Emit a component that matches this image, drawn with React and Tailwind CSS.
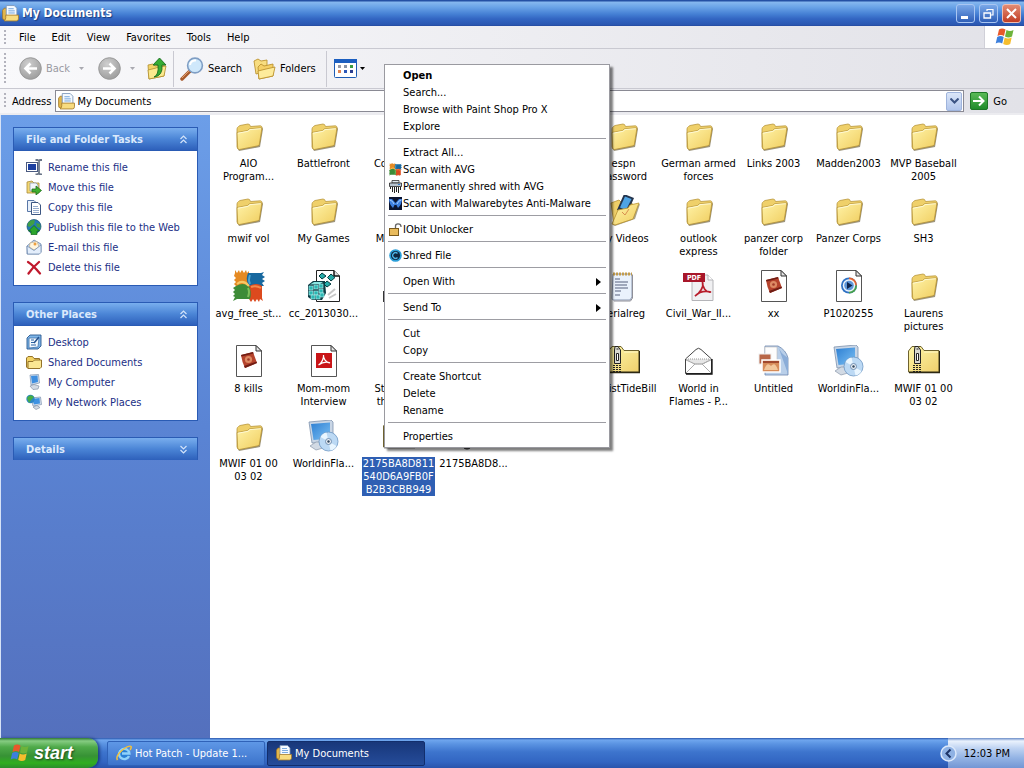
import React from "react";

/* ---------- large icons ---------- */

function Folder() {
    return (
        <svg width="32" height="32" viewBox="0 0 32 32">
            <path d="M6 31 L27 27 L30 9 L29 7 L26 25 L5 29 Z" fill="#7d7352" opacity=".75" />
            <path d="M4 9 Q4 7.500 5.500 6.500 L7 5.500 L15 4 Q17 4 17.500 6.500 L27.500 5.800 Q29 6 29 8 L26 25 L5 29 L4 27 Z" fill="#efd06a" stroke="#b9973c" strokeWidth=".8" />
            <path d="M4 12.500 L14.500 10.500 L16.500 8.800 L28 7.800 Q29 8 28.800 9 L26.300 24.500 Q26 25.500 25 25.800 L6.500 29.500 Q4.800 29.500 4.700 28 Z" fill="url(#folderFront)" stroke="#b08c30" strokeWidth=".7" />
            <path d="M5 13.200 L15 11.300 L17 9.600 L27.800 8.700" fill="none" stroke="#fffcdc" strokeWidth=".9" />
        </svg>
    );
}

function Page({ children }) {
    return (
        <svg width="32" height="32" viewBox="0 0 32 32">
            <path d="M3.500 .5 H23 L28.500 6 V31.500 H3.500 Z" fill="#fff" stroke="#555" />
            <path d="M23 .5 V6 H28.500 Z" fill="#e4e4e4" stroke="#333" />
            {children}
        </svg>
    );
}

function PhotoPage() {
    return (
        <Page>
            <path d="M8 10 L20 7 L24 18 L12 23 Q9 17 8 10 Z" fill="#b5432c" />
            <path d="M8 10 L20 7 L20.500 8.500 L8.500 11.500 Z M11 21 L12 23 L24 18 L23.500 16.500 Z" fill="#6f1d14" />
            <circle cx="15.500" cy="14.500" r="3.600" fill="#dd8a63" />
            <circle cx="15.500" cy="14.500" r="1.300" fill="#a23b28" />
        </Page>
    );
}

function MediaPage() {
    return (
        <Page>
            <circle cx="16" cy="15.500" r="8" fill="#2f72c4" />
            <path d="M16 7.500 A8 8 0 0 1 24 15.500 H16 Z" fill="#e2632f" />
            <path d="M24 15.500 A8 8 0 0 1 16 23.500 V15.500 Z" fill="#45a04c" />
            <circle cx="16" cy="15.500" r="6.200" fill="#eef4fb" />
            <circle cx="16" cy="15.500" r="4.800" fill="#5d96d8" />
            <path d="M14 12 L19.500 15.500 L14 19 Z" fill="#10254d" />
        </Page>
    );
}

function AdobePage() {
    return (
        <Page>
            <rect x="8" y="8" width="16" height="15" fill="#c91518" />
            <path d="M10.500 20 C14 18 16 13 15.500 10 C15 13 18 18 22 17.800 C18 16.500 14 17.500 10.500 20 Z" fill="none" stroke="#fff" strokeWidth="1.200" />
        </Page>
    );
}

function PdfFile() {
    return (
        <svg width="32" height="32" viewBox="0 0 32 32">
            <path d="M9 5 H25 L30 10 V30.500 H9 Z" fill="#f0f0f2" stroke="#b4b4b8" />
            <path d="M25 5 V10 H30" fill="#fff" stroke="#b4b4b8" />
            <rect x="0" y="3" width="22" height="9" fill="#a8162a" />
            <text x="11" y="10" textAnchor="middle" fontSize="7" fontWeight="bold" fill="#fff">PDF</text>
            <path d="M12 26 C17 23 21 17 19.500 12 C19 17 23 23 28 22 C22 20.500 16 22 12 26 Z" fill="none" stroke="#b81e2c" strokeWidth="1.700" />
        </svg>
    );
}

function AvgIcon({ size = 32 }) {
    return (
        <svg width={size} height={size} viewBox="0 0 32 32">
            <path d="M2 3 L2 0 4 3 6 0 7 3 9 0 11 3 13 0 14 3 16 1 V16 H3 L1 14 3 12 1 10 3 8 1 6 Z" fill="#e58a23" />
            <path d="M15 3 H28 L31 2 29 5 32 7 29 9 32 11 29 13 31 16 H16 Q12 10 15 3 Z" fill="#17689f" />
            <path d="M16 16 Q24 12 29 16 V28 L30 31 27 29 26 32 24 29 22 32 20 29 18 32 16 29 Z" fill="#dc4a1e" />
            <path d="M17 29 H4 L0 31 2 27 0 26 2 24 0 22 2 20 0 18 3 16 Q10 12 16 16 Q19 22 17 29 Z" fill="#3d8b37" />
            <path d="M4 14 Q10 9 16 16" fill="none" stroke="#f8c765" strokeWidth="2" />
            <path d="M17 5 Q15 10 17 14" fill="none" stroke="#4ba3d2" strokeWidth="2" />
            <path d="M28 18 Q23 15 18 17" fill="none" stroke="#f58a4c" strokeWidth="2" />
            <path d="M15 27 Q17 22 15 18" fill="none" stroke="#7fbf5a" strokeWidth="2" />
        </svg>
    );
}

function RegistryFile() {
    const cubes = [[1, 16], [6, 15], [11, 14], [1, 21], [6, 21], [11, 19], [3, 25], [8, 25], [12, 23]];
    return (
        <svg width="32" height="32" viewBox="0 0 32 32">
            <path d="M8.500 .5 H26 L31.500 6 V31.500 H8.500 Z" fill="#fff" stroke="#222" />
            <path d="M26 .5 V6 H31.500" fill="#ddd" stroke="#111" strokeWidth="1.500" />
            <path d="M0 15 L5 11 H17 L18 23 L14 30 H4 L0 27 Z" fill="#0b3c44" />
            <path d="M2 14.500 L6 12 H15 L12 14 Z" fill="#8be6e2" />
            {cubes.map(([x, y]) => <rect key={`${x}-${y}`} x={x} y={y} width="4" height="4" fill="#2bb7b3" stroke="#b8f2f0" strokeWidth=".6" />)}
            <path d="M14 3 L18 6 14 9 11 6 Z M23 4 L27 7.500 23 11 19.500 7.500 Z M19 11 L23 14 19 17 16 14 Z" fill="#25aaa8" stroke="#063c40" />
            <path d="M20 25 L27 19 M21 28 L28 24" stroke="#c7c7c7" strokeWidth="2" />
        </svg>
    );
}

function NotepadFile() {
    return (
        <svg width="32" height="32" viewBox="0 0 32 32">
            <path d="M5 4 H24 V27 L22 30 H5 Q4 30 4 28 Z" fill="#eaf2fc" stroke="#8b98b0" />
            <path d="M24.500 5 V28 L22.500 31 H6" fill="none" stroke="#8f8f98" />
            <path d="M5 4 H24" stroke="#c29c4c" strokeWidth="3" strokeDasharray="2 1" />
            <path d="M7 9 H12 M7 12 H20 M7 15 H19 M7 18 H20 M7 21 H13 M7 25 H12" stroke="#56617c" />
        </svg>
    );
}

function WindowFile() {
    return (
        <svg width="32" height="32" viewBox="0 0 32 32">
            <rect x=".5" y="21.500" width="31" height="10" fill="#fff" stroke="#333" />
            <rect x="3" y="2" width="26" height="19" fill="#d9e4f4" stroke="#55688c" />
        </svg>
    );
}

function ZipFolder() {
    return (
        <svg width="32" height="32" viewBox="0 0 32 32">
            <path d="M.5 27 V6 L4 1.500 H13 L16 5.500 H31 V27 Z" fill="url(#zipFront)" stroke="#6e622e" />
            <path d="M31.500 6 V27.500 H1" fill="none" stroke="#2c2814" strokeWidth="1.300" />
            <path d="M16 7 H30" stroke="#fff9c9" />
            <path d="M7 1.500 H10 L12.500 5 V18.500 H6.500 V5 Z" fill="#d9d9d0" stroke="#222" />
            <path d="M8.500 8.500 H10.500 V15.500 H8.500 Z M8.500 4 H10.500" fill="#fff" stroke="#222" />
            <path d="M5 20.500 H13 M5 22.500 H13 M5 24.500 H13 M5 26.500 H13" stroke="#222" strokeWidth="1.200" strokeDasharray="2 1" />
        </svg>
    );
}

function DiscFile() {
    return (
        <svg width="32" height="32" viewBox="0 0 32 32">
            <rect x="4" y="2" width="22" height="18" fill="#cfdcee" stroke="#5c6f8f" />
            <circle cx="9" cy="24" r="5" fill="#666" stroke="#222" />
        </svg>
    );
}

function EnvelopeFile() {
    return (
        <svg width="32" height="32" viewBox="0 0 32 32">
            <path d="M2.500 14 L13 4.500 Q15.500 2 18 4.500 L28.500 14 V28.500 H2.500 Z" fill="#fff" stroke="#444" />
            <path d="M3 14 H28 L20 19 H11 Z" fill="#e6e6e6" stroke="#999" strokeDasharray="1 1" />
            <path d="M3 28 L12 19 H19 L28 28 M3 15 L12 19 M28 15 L19 19" fill="none" stroke="#aaa" />
            <path d="M29 14 V29 H3" fill="none" stroke="#111" strokeWidth="1.300" />
        </svg>
    );
}

function PictureFile() {
    return (
        <svg width="32" height="32" viewBox="0 0 32 32">
            <path d="M7 1 H20 Q28 5 30 13 V30 H7 Z" fill="#b9cfe9" stroke="#6c87ad" strokeWidth=".8" />
            <path d="M20 1 Q22 8 30 13 L30 29 Z" fill="#8badd8" />
            <rect x="7" y="2" width="12" height="15" fill="#fdfdfd" stroke="#bbb" strokeWidth=".6" />
            <rect x="1" y="9" width="12" height="10" fill="#b86748" stroke="#eee" />
            <rect x="4" y="15" width="18" height="12" fill="#d68b58" stroke="#fff" strokeWidth="1.500" />
            <path d="M6 25 Q9 16 13 21 Q17 16 20 25 Z" fill="#f2c79b" />
            <path d="M5 16 H21 V18 H5 Z" fill="#a1492d" />
        </svg>
    );
}

function InstallerFile() {
    return (
        <svg width="32" height="32" viewBox="0 0 32 32">
            <path d="M1 2 L23 0 L25 2 V21 L4 23 Z" fill="#c9d6e6" stroke="#7f93ad" strokeWidth=".8" />
            <path d="M3 4 L22 2.500 V18.500 L5.500 20 Z" fill="url(#screen)" />
            <path d="M2 26 L8 22 H14 L15 28 L8 30 Z" fill="#d2dae4" stroke="#8b98aa" strokeWidth=".7" />
            <circle cx="20.500" cy="21.500" r="9.500" fill="#bcd9f4" stroke="#6c97c4" strokeWidth=".8" />
            <path d="M20.500 21.500 L12.500 17 A9 9 0 0 1 18.500 12.500 Z M20.500 21.500 L28.500 26 A9 9 0 0 1 22.500 30.500 Z" fill="#eaf6ff" />
            <circle cx="20.500" cy="21.500" r="3" fill="#e9eef4" stroke="#7190b2" />
            <circle cx="20.500" cy="21.500" r="1.200" fill="#33475e" />
        </svg>
    );
}

function VideosFolder() {
    return (
        <svg width="32" height="32" viewBox="0 0 32 32">
            <path d="M3 8 L11 5 L14 8 L24 8 V22 L6 29 Z" fill="#efcf68" stroke="#b9922f" strokeWidth=".8" />
            <path d="M16 -1 L26 3 L19 19 L9 15 Z" fill="#23344d" />
            <path d="M17 1.500 L23.500 4 L18 15 L12 12.500 Z" fill="#4fa4e4" />
            <path d="M5 30 L10 15 L16 14 L19 21 L24 11 L32 9 L27 24 L7 31 Z" fill="#6f6542" opacity=".6" />
            <path d="M4 29 L10 15 L20 13 L22 10 L31 8 L25 24 L7 30 Z" fill="url(#folderFront)" stroke="#b9922f" strokeWidth=".8" />
            <path d="M14 17 L17 20 L21 14" fill="none" stroke="#d88f50" />
        </svg>
    );
}

/* ---------- small icons ---------- */

function Svg16({ size = 16, children }) {
    return <svg width={size} height={size} viewBox="0 0 16 16" className="shrink-0">{children}</svg>;
}

function DocsIcon({ size = 16 }) {
    return (
        <Svg16 size={size}>
            <path d="M.5 5 L2 3 H5 V14 H2 Q.5 14 .5 12 Z" fill="#e2b64a" stroke="#9c742a" strokeWidth=".7" />
            <path d="M4 .5 H11.500 L14 3 V11 H4 Z" fill="#f5faff" stroke="#7894b8" strokeWidth=".8" />
            <path d="M6 3.500 H11 M6 5.500 H12 M6 7.500 H12" stroke="#6ea2dc" strokeWidth=".9" />
            <path d="M3.500 9.500 H15.500 V13 Q15.500 15 13.500 15 H2 Q3.500 14 3.500 12 Z" fill="#f8dc80" stroke="#a67c2c" strokeWidth=".8" />
        </Svg16>
    );
}

function RenameIcon() {
    return (
        <Svg16>
            <rect x=".5" y="3.500" width="11" height="9" fill="#fff" stroke="#4a5a80" />
            <rect x="2" y="5" width="8" height="6" fill="#1c3fa0" />
            <path d="M9.500 1 H11.500 L13 2 L14 1 H16 M13 2 V14 M9.500 15.500 H11.500 L13 14 L14 15.500 H16" fill="none" stroke="#6b7688" strokeWidth="1.800" />
        </Svg16>
    );
}

function MoveIcon() {
    return (
        <Svg16>
            <path d="M1 3 L6 2 L8 4 H13 V14 H1 Z" fill="#f3d772" stroke="#a88a38" strokeWidth=".8" />
            <path d="M4 4 H10 L12 6 V12 H4 Z" fill="#f2f6fb" stroke="#8090a8" strokeWidth=".7" />
            <path d="M6 10 H10 V7 L15.500 11.500 L10 16 V13 H6 Z" fill="#3fae2e" stroke="#1e6f1c" strokeWidth=".8" />
        </Svg16>
    );
}

function CopyIcon() {
    return (
        <Svg16>
            <path d="M1.500 1.500 H8 L10.500 4 V12.500 H1.500 Z" fill="#e8f0fa" stroke="#5877a8" />
            <path d="M5.500 3.500 H12 L14.500 6 V15.500 H5.500 Z" fill="#fff" stroke="#3c5682" />
            <path d="M7 7.500 H12 M7 9.500 H13 M7 11.500 H13 M7 13.500 H13" stroke="#8aa3c8" strokeWidth=".9" />
        </Svg16>
    );
}

function PublishIcon() {
    return (
        <Svg16>
            <circle cx="8" cy="7.500" r="7" fill="#2378b8" stroke="#15506c" strokeWidth=".7" />
            <path d="M2 4 Q5 0 9 1.500 L8 5 L4 8 L1.500 7 Z M10 4 L14 5 L14.500 9 L11 8 Z" fill="#3f9f45" />
            <path d="M8 6.500 L13.500 12 H11 V15.500 H5 V12 H2.500 Z" fill="#2ba52c" stroke="#10661b" strokeWidth=".7" />
        </Svg16>
    );
}

function MailIcon() {
    return (
        <Svg16>
            <path d="M1 7 L8 1 L15 5 V13 L13 15 H1 Z" fill="#c7d9ef" stroke="#6b86ac" strokeWidth=".8" />
            <path d="M4 4 L11 2.500 L13 8 L8 11 L3.500 8 Z" fill="#fff6df" stroke="#c3a878" strokeWidth=".6" />
            <circle cx="9" cy="5" r="1.500" fill="#eda040" />
            <path d="M1 7 L8 11.500 L15 6 V13.500 L13.500 15 H1.500 Z" fill="#e4eefb" stroke="#6b86ac" strokeWidth=".7" />
        </Svg16>
    );
}

function DeleteIcon() {
    return (
        <Svg16>
            <path d="M2 3 Q7 6 14 14.500 M13 3 Q7 8 2.500 14.500" fill="none" stroke="#c0182c" strokeWidth="2.200" strokeLinecap="round" />
        </Svg16>
    );
}

function DesktopIcon() {
    return (
        <Svg16>
            <path d="M1 4 L4 1 H15 V12 L12 15 H1 Z" fill="#7fb6e8" stroke="#28578f" strokeWidth=".9" />
            <path d="M3 4 H13 L12 13 L3 14 Z" fill="#f4f9fe" stroke="#3c6ea8" strokeWidth=".8" />
            <path d="M5 6 H8 M5 8.500 H8 M5 11 H10" stroke="#2d65a6" />
            <path d="M8 9 L13 3" stroke="#23508c" strokeWidth="1.500" />
        </Svg16>
    );
}

function SharedIcon() {
    return (
        <Svg16>
            <path d="M.5 4 L2 2.500 H6.500 L8 4.500 H13.500 V14.500 H2 L.5 13 Z" fill="#f2d264" stroke="#94732a" />
            <path d="M2 7.500 H7 L8.500 6 H15.500 V13 L14 14.500 H2 Z" fill="#fbe793" stroke="#94732a" />
        </Svg16>
    );
}

function ComputerIcon() {
    return (
        <Svg16>
            <path d="M4 1 L12.500 .500 L13.500 9 L5 11 Z" fill="#d5e1ef" stroke="#7c91ad" strokeWidth=".7" />
            <path d="M5 2 L11.500 1.500 L12 8 L6 9.500 Z" fill="#3f8fe0" />
            <path d="M4 12 L8 10.500 L13 12 L12 15 L7 15.500 Z" fill="#d3dae4" stroke="#8492a6" strokeWidth=".7" />
        </Svg16>
    );
}

function NetworkIcon() {
    return (
        <Svg16>
            <path d="M5 4 L14.500 3 L15.500 10.500 L7 12 Z" fill="#d5e1ef" stroke="#7c91ad" strokeWidth=".7" />
            <path d="M6 5 L13.500 4 L14 9.500 L8 10.500 Z" fill="#3f92e2" />
            <path d="M7 13 L11 11.500 L14 13.500 L10 15.500 Z" fill="#d3dae4" stroke="#8492a6" strokeWidth=".7" />
            <circle cx="4.500" cy="5" r="4.200" fill="#2c86c4" />
            <path d="M1 4 Q4 -1 8 3 L5 6 L3 9 Z" fill="#46ad45" />
        </Svg16>
    );
}

function FlagIcon({ size = 20 }) {
    return (
        <svg width={size} height={size} viewBox="0 0 20 20" className="shrink-0">
            <path d="M4 2.500 Q7 .500 10.500 2.500 L9 9 Q6 7 2.500 9 Z" fill="#e8582a" />
            <path d="M11.500 3 Q15 5 18.500 3 L17 9.500 Q13.500 11.500 10 9.500 Z" fill="#6db33a" />
            <path d="M2.200 10 Q5.500 8 8.700 10 L7.200 16.500 Q4 14.500 .700 16.500 Z" fill="#3c7fdc" />
            <path d="M9.700 10.500 Q13 12.500 16.700 10.500 L15.200 17 Q12 19 8.200 17 Z" fill="#f6bd2d" />
        </svg>
    );
}

function IeIcon() {
    return (
        <Svg16>
            <circle cx="8" cy="8.500" r="6" fill="#2a7fd4" />
            <path d="M13 11 A5.200 5.200 0 1 1 13.400 8.500 H6" fill="none" stroke="#8fd2fa" strokeWidth="2.400" />
            <path d="M1.500 15 Q-1 11 7 4.500 Q13.500 0 15 1.500 Q15.700 2.500 14 5" fill="none" stroke="#f4c03a" strokeWidth="1.500" />
        </Svg16>
    );
}

function ShredderIcon() {
    return (
        <svg width="13" height="13" viewBox="0 0 13 13">
            <path d="M3 .5 H10 V3 H3 Z" fill="#dfe9f2" stroke="#333" strokeWidth=".8" />
            <path d="M.5 3 H12.500 V6.500 H.5 Z" fill="#b8c4d0" stroke="#222" strokeWidth=".8" />
            <path d="M1.500 7 V9 M3.500 7 V12 M5.500 7 V13 M7.500 7 V12 M9.500 7 V13 M11.500 7 V10" stroke="#222" />
            <rect x="9" y="4" width="2" height="1" fill="#2f7fd0" />
        </svg>
    );
}

function MalwareIcon() {
    return (
        <svg width="13" height="13" viewBox="0 0 13 13">
            <rect width="13" height="13" fill="#0b1430" />
            <path d="M0 2 L3 2 L6.500 6 L10 2 L13 2 Q13 7 9 11 L7.500 8 H5.500 L4 11 Q0 7 0 2 Z" fill="#3d7fe0" />
            <path d="M1 3 L3.500 4.500 L5 7 M12 3 L9.500 4.500 L8 7" fill="none" stroke="#a8d0ff" />
        </svg>
    );
}

function UnlockIcon() {
    return (
        <svg width="13" height="13" viewBox="0 0 13 13">
            <path d="M6.500 5 V3 Q6.500 .800 9 .800 Q12 .800 12 3.500 V4" fill="none" stroke="#666" strokeWidth="1.300" />
            <rect x=".5" y="5.500" width="9" height="7" fill="#e9bb5c" stroke="#7a5a1c" />
        </svg>
    );
}

function ShredFileIcon() {
    return (
        <svg width="13" height="13" viewBox="0 0 13 13">
            <circle cx="6.500" cy="6.500" r="6.300" fill="#2b9fd9" />
            <circle cx="6.500" cy="6.500" r="4.600" fill="#10263f" />
            <path d="M8.500 4.500 A2.800 2.800 0 1 0 8.500 8.500" fill="none" stroke="#4db6e8" strokeWidth="1.300" />
        </svg>
    );
}

/* ---------- data ---------- */

const files = [
    { name: "AIO\nProgram...", icon: Folder },
    { name: "Battlefront", icon: Folder },
    { name: "Computer", icon: Folder },
    { name: "", icon: Folder },
    { name: "", icon: Folder },
    { name: "espn\npassword", icon: Folder },
    { name: "German armed\nforces", icon: Folder },
    { name: "Links 2003", icon: Folder },
    { name: "Madden2003", icon: Folder },
    { name: "MVP Baseball\n2005", icon: Folder },
    { name: "mwif vol", icon: Folder },
    { name: "My Games", icon: Folder },
    { name: "My Music", icon: Folder },
    { name: "", icon: Folder },
    { name: "", icon: Folder },
    { name: "My Videos", icon: VideosFolder },
    { name: "outlook\nexpress", icon: Folder },
    { name: "panzer corp\nfolder", icon: Folder },
    { name: "Panzer Corps", icon: Folder },
    { name: "SH3", icon: Folder },
    { name: "avg_free_st...", icon: AvgIcon },
    { name: "cc_2013030...", icon: RegistryFile },
    { name: "", icon: WindowFile },
    { name: "", icon: Page },
    { name: "", icon: Page },
    { name: "serialreg", icon: NotepadFile },
    { name: "Civil_War_II...", icon: PdfFile },
    { name: "xx", icon: PhotoPage },
    { name: "P1020255", icon: MediaPage },
    { name: "Laurens\npictures", icon: Folder },
    { name: "8 kills", icon: PhotoPage },
    { name: "Mom-mom\nInterview", icon: AdobePage },
    { name: "Stonewall\nthe raids", icon: Folder },
    { name: "", icon: Page },
    { name: "", icon: Folder },
    { name: "RacistTideBill", icon: ZipFolder },
    { name: "World in\nFlames - P...", icon: EnvelopeFile },
    { name: "Untitled", icon: PictureFile },
    { name: "WorldinFla...", icon: InstallerFile },
    { name: "MWIF 01 00\n03 02", icon: ZipFolder },
    { name: "MWIF 01 00\n03 02", icon: Folder },
    { name: "WorldinFla...", icon: InstallerFile },
    { name: "2175BA8D811\n540D6A9FB0F\nB2B3CBB949", icon: ZipFolder, selected: true },
    { name: "2175BA8D8...", icon: DiscFile },
];

const tasks = [
    { label: "Rename this file", icon: RenameIcon },
    { label: "Move this file", icon: MoveIcon },
    { label: "Copy this file", icon: CopyIcon },
    { label: "Publish this file to the Web", icon: PublishIcon },
    { label: "E-mail this file", icon: MailIcon },
    { label: "Delete this file", icon: DeleteIcon },
];

const places = [
    { label: "Desktop", icon: DesktopIcon },
    { label: "Shared Documents", icon: SharedIcon },
    { label: "My Computer", icon: ComputerIcon },
    { label: "My Network Places", icon: NetworkIcon },
];

const menuGroups = [
    [{ label: "Open", bold: true }, { label: "Search..." }, { label: "Browse with Paint Shop Pro X" }, { label: "Explore" }],
    [
        { label: "Extract All..." },
        { label: "Scan with AVG", icon: <AvgIcon size={13} /> },
        { label: "Permanently shred with AVG", icon: <ShredderIcon /> },
        { label: "Scan with Malwarebytes Anti-Malware", icon: <MalwareIcon /> },
    ],
    [{ label: "IObit Unlocker", icon: <UnlockIcon /> }],
    [{ label: "Shred File", icon: <ShredFileIcon /> }],
    [{ label: "Open With", sub: true }],
    [{ label: "Send To", sub: true }],
    [{ label: "Cut" }, { label: "Copy" }],
    [{ label: "Create Shortcut" }, { label: "Delete" }, { label: "Rename" }],
    [{ label: "Properties" }],
];

/* ---------- pieces ---------- */

function Grip() {
    return <div className="my-1 w-[3px] shrink-0 self-stretch bg-[radial-gradient(circle_at_1px_1px,#b3b3bd_1px,transparent_1px)] bg-[size:3px_4px]" />;
}

function Caret({ color = "#000" }) {
    return <svg width="5" height="3" viewBox="0 0 5 3" className="shrink-0"><path d="M0 0 H5 L2.500 3 Z" fill={color} /></svg>;
}

function RoundArrow({ flip }) {
    return (
        <svg width="23" height="23" viewBox="0 0 23 23" className="shrink-0">
            <circle cx="11.500" cy="11.500" r="10.800" fill="url(#grayBall)" stroke="#999" />
            <path d={flip ? "M5 11.500 H16 M11.500 6.500 L16.500 11.500 L11.500 16.500" : "M18 11.500 H7 M11.500 6.500 L6.500 11.500 L11.500 16.500"} fill="none" stroke="#fff" strokeWidth="2.600" />
        </svg>
    );
}

function TitleBar() {
    const base = "flex size-[19px] items-center justify-center rounded-[3px] border";
    return (
        <header className="flex h-[26px] shrink-0 items-center gap-[3px] bg-[linear-gradient(#2450a4_0,#2450a4_1px,#86b8ef_2px,#6ba4e8_7px,#4580d4_14px,#3265c2_19px,#2a56b0_25px,#24479a_26px)] pl-[2px] pr-[3px]">
            <DocsIcon size={17} />
            <h1 className="flex-1 text-xs font-bold text-white [text-shadow:1px_1px_1px_#173a7e]">My Documents</h1>
            <button aria-label="Minimize" className={`${base} border-[#a9c6f2] bg-linear-to-b from-[#7aa8e8] to-[#2f5fb8]`}>
                <svg width="11" height="11"><rect x="1" y="8" width="7" height="3" fill="#fff" /></svg>
            </button>
            <button aria-label="Restore" className={`${base} ml-[1px] border-[#a9c6f2] bg-linear-to-b from-[#7aa8e8] to-[#2f5fb8]`}>
                <svg width="11" height="11"><path d="M4 3 V1.500 H10 V7 H8" fill="none" stroke="#fff" strokeWidth="1.200" /><path d="M1 5 H7.500 V10 H1 Z" fill="none" stroke="#fff" strokeWidth="1.300" /></svg>
            </button>
            <button aria-label="Close" className={`${base} ml-[1px] border-[#f0bdb0] bg-linear-to-b from-[#e28b73] to-[#c03b22]`}>
                <svg width="11" height="11"><path d="M1 1 L10 10 M10 1 L1 10" stroke="#fff" strokeWidth="2" /></svg>
            </button>
        </header>
    );
}

function MenuBar() {
    return (
        <nav className="flex h-[23px] shrink-0 items-center border-b border-[#c9c9d1] bg-linear-to-r from-[#f9f9fb] to-[#e2e2e8] pl-1">
            <Grip />
            <div className="flex flex-1 pl-1">
                {["File", "Edit", "View", "Favorites", "Tools", "Help"].map((item) => (
                    <button key={item} className="px-2">{item}</button>
                ))}
            </div>
            <div className="flex h-full w-10 items-center justify-center border-l border-[#d0d0d8] bg-white">
                <FlagIcon size={20} />
            </div>
        </nav>
    );
}

function Toolbar() {
    return (
        <div className="flex h-10 shrink-0 items-center border-b border-[#c9c9d1] bg-linear-to-r from-[#f9f9fb] to-[#e2e2e8] pl-1">
            <Grip />
            <button className="ml-3 flex items-center gap-1 text-[#9a9aa2]"><RoundArrow />Back</button>
            <span className="ml-[9px]"><Caret color="#a9a9b0" /></span>
            <button aria-label="Forward" className="ml-[14px]"><RoundArrow flip /></button>
            <span className="ml-[9px]"><Caret color="#a9a9b0" /></span>
            <button aria-label="Up" className="ml-3">
                <svg width="20" height="23" viewBox="0 0 20 23">
                    <path d="M1 8 L6 7 L8 9 L17 7 V19 L2 22 Z" fill="#f3d468" stroke="#b08d2d" strokeWidth=".8" />
                    <path d="M1 13 L9 11 L11 10 L19 9 L17 19 L2 22 Z" fill="#fbe98e" stroke="#b08d2d" strokeWidth=".8" />
                    <path d="M7 20 Q12 18 11 8 H6 L12.500 1 L19 8 H15 Q16 19 7 20 Z" fill="#36ac34" stroke="#176c1c" strokeWidth=".9" />
                </svg>
            </button>
            <div className="mx-[6px] h-9 w-px bg-[#c9c9d1]" />
            <button className="flex items-center gap-1">
                <svg width="24" height="24" viewBox="0 0 24 24">
                    <path d="M2 22 L10 14" stroke="#a85a2c" strokeWidth="3.500" strokeLinecap="round" />
                    <path d="M2 21 L9 14" stroke="#e0a070" strokeWidth="1" />
                    <circle cx="15" cy="8.500" r="7.400" fill="#cfe8fb" stroke="#7f9ec4" strokeWidth="1.600" />
                    <path d="M10 8 A5 5 0 0 1 16 3.500" fill="none" stroke="#fff" strokeWidth="2" />
                </svg>
                Search
            </button>
            <button className="ml-[11px] flex items-center gap-1">
                <svg width="23" height="23" viewBox="0 0 23 23">
                    <path d="M1 4 L5 2 L8 4 L14 3 V14 L3 17 Z" fill="#f8dd80" stroke="#bc9330" strokeWidth=".9" />
                    <path d="M5 10 L8 7 L11 9 L20 7 V19 L6 22 Z" fill="#f5d066" stroke="#bc9330" strokeWidth=".9" />
                    <path d="M5 14 L13 12 L22 10 L20 19 L6 22 Z" fill="#fdeb9b" stroke="#bc9330" strokeWidth=".9" />
                </svg>
                Folders
            </button>
            <div className="ml-[10px] mr-[7px] h-9 w-px bg-[#c9c9d1]" />
            <button aria-label="Views" className="flex items-center gap-[3px]">
                <svg width="23" height="19" viewBox="0 0 23 19">
                    <rect x=".5" y=".5" width="22" height="18" rx="1" fill="#fff" stroke="#1d5cb4" />
                    <rect width="23" height="4" fill="#1c5fc0" />
                    <path d="M4 6h3v3h-3z" fill="#9a9aa4" /><path d="M4 11h3v3h-3z" fill="#e08552" />
                    <path d="M10 6h3v3h-3z" fill="#8894a8" /><path d="M10 11h3v3h-3z" fill="#2c58b8" />
                    <path d="M16 6h3v3h-3z" fill="#3a9c3f" /><path d="M16 11h3v3h-3z" fill="#2c3f90" />
                </svg>
                <Caret />
            </button>
        </div>
    );
}

function AddressBar() {
    return (
        <div className="flex h-[26px] shrink-0 items-center border-b-2 border-[#ececf0] bg-linear-to-r from-[#f6f6f9] to-[#e2e2e8] pl-1">
            <Grip />
            <label htmlFor="address" className="ml-[5px] mr-1">Address</label>
            <div className="flex h-[22px] flex-1 items-center border border-[#8a8a94] bg-white pl-[2px]">
                <DocsIcon size={17} />
                <input id="address" defaultValue="My Documents" className="ml-[2px] min-w-0 flex-1 outline-none" />
                <button aria-label="Show addresses" className="mr-px flex h-[19px] w-4 items-center justify-center rounded-[2px] border border-[#9fb4dc] bg-linear-to-b from-[#dbe6f8] to-[#b2c6ec]">
                    <svg width="9" height="6" viewBox="0 0 9 6"><path d="M.500 .500 L4.500 4.500 L8.500 .500" fill="none" stroke="#3c5484" strokeWidth="2" /></svg>
                </button>
            </div>
            <button className="ml-[6px] mr-[17px] flex items-center gap-[5px]">
                <svg width="18" height="18" viewBox="0 0 18 18">
                    <rect x=".5" y=".5" width="17" height="17" rx="1.500" fill="url(#goGreen)" stroke="#1d7626" />
                    <path d="M3 9 H13 M9 4.500 L13.500 9 L9 13.500" fill="none" stroke="#fff" strokeWidth="2" />
                </svg>
                Go
            </button>
        </div>
    );
}

function Panel({ title, items }) {
    const open = Boolean(items);
    return (
        <section>
            <button className="flex h-[23px] w-full items-center justify-between border-x border-t border-[#2a5bb4] bg-linear-to-b from-[#79aeee] via-[#4b85d6] to-[#2e60bb] pl-3 pr-[9px] text-left font-bold text-[#dbe9fc]">
                {title}
                <svg width="9" height="9" viewBox="0 0 9 9" fill="none" stroke="#d3e3fa" strokeWidth="1.200">
                    <path d={open ? "M1.500 4 L4.500 1 L7.500 4 M1.500 8 L4.500 5 L7.500 8" : "M1.500 1 L4.500 4 L7.500 1 M1.500 5 L4.500 8 L7.500 5"} />
                </svg>
            </button>
            {open && (
                <ul className="border border-[#2a5bb4] bg-white pb-2 pl-3 pt-[6px]">
                    {items.map(({ label, icon: Icon }) => (
                        <li key={label} className="h-5">
                            <a href="#" className="flex h-full items-center gap-[6px] text-[#1b2f86]"><Icon />{label}</a>
                        </li>
                    ))}
                </ul>
            )}
        </section>
    );
}

function FileItem({ name, icon: Icon, selected }) {
    return (
        <button className="flex h-[75px] w-[75px] flex-col items-center gap-[5px]">
            <span className="size-8 shrink-0"><Icon /></span>
            {name && <span className={selected ? "whitespace-pre bg-[#2f5fb3] px-px leading-[13px] text-white" : "whitespace-pre leading-[13px]"}>{name}</span>}
        </button>
    );
}

function ContextMenu() {
    return (
        <div role="menu" className="absolute left-[384px] top-16 w-[226px] border border-[#9a9aa0] bg-white py-[2px] shadow-[3px_3px_2px_rgba(0,0,0,0.5)]">
            {menuGroups.map((group, i) => (
                <div key={i}>
                    {i > 0 && <hr className="mx-[3px] mb-[5px] mt-[3px] border-t border-[#9d9da3]" />}
                    {group.map(({ label, icon, bold, sub }) => (
                        <button key={label} role="menuitem" className="flex h-[17px] w-full items-center pl-1 pr-2 text-left">
                            <span className="w-[14px] shrink-0">{icon}</span>
                            <span className={bold ? "flex-1 font-bold" : "flex-1"}>{label}</span>
                            {sub && <svg width="5" height="8" viewBox="0 0 5 8"><path d="M0 0 L5 4 L0 8 Z" fill="#000" /></svg>}
                        </button>
                    ))}
                </div>
            ))}
        </div>
    );
}

function Taskbar() {
    return (
        <footer className="flex h-[30px] shrink-0 items-center bg-[linear-gradient(#2a56ac_0,#6fa6ee_2px,#5a93e2_6px,#3d74cd_14px,#3265c2_24px,#2a54ac_30px)]">
            <button className="flex h-full w-[98px] items-center gap-1 rounded-r-[10px] bg-[linear-gradient(#2f7a34_0,#86cc82_3px,#4faa4a_9px,#379235_18px,#2fae1f_25px,#2b8d2c_30px)] pl-[10px] font-['Liberation_Sans',sans-serif] text-[18px] font-bold italic text-white shadow-[2px_0_3px_rgba(10,30,90,0.6)] [text-shadow:1px_1px_2px_#1d4a1d]">
                <FlagIcon size={20} />
                start
            </button>
            <div className="flex flex-1 gap-[2px] pl-[9px]">
                <button className="flex h-[25px] w-[158px] items-center gap-[3px] rounded-[2px] border border-[#2f62b8] bg-linear-to-b from-[#5e97e6] to-[#3c73cb] pl-2 text-white">
                    <IeIcon />
                    Hot Patch - Update 1...
                </button>
                <button className="flex h-[25px] w-[158px] items-center gap-[3px] rounded-[2px] border border-[#122e6c] bg-linear-to-b from-[#18377a] to-[#254c9a] pl-2 text-white">
                    <DocsIcon />
                    My Documents
                </button>
            </div>
            <div className="flex h-full items-center bg-[linear-gradient(#6a8cc8_0,#eaf2fd_3px,#c0d4f2_10px,#93b3e4_20px,#7396d4_30px)] pr-[14px]">
                <button aria-label="Show hidden icons" className="-ml-2">
                    <svg width="17" height="17" viewBox="0 0 17 17">
                        <circle cx="8.500" cy="8.500" r="7.500" fill="#8fb2e4" stroke="#dce9fb" strokeWidth="1.500" />
                        <path d="M10.500 4.500 L6.500 8.500 L10.500 12.500" fill="none" stroke="#1d3467" strokeWidth="2" />
                    </svg>
                </button>
                <time className="ml-[7px]">12:03 PM</time>
            </div>
        </footer>
    );
}

function Gradients() {
    return (
        <svg width="0" height="0" className="absolute" aria-hidden="true">
            <defs>
                <linearGradient id="folderFront" x1="0" y1="0" x2="1" y2="1">
                    <stop offset="0" stopColor="#fff3a8" /><stop offset="1" stopColor="#f0cd5e" />
                </linearGradient>
                <linearGradient id="zipFront" x1="0" y1="0" x2="1" y2="1">
                    <stop offset="0" stopColor="#fdf6a8" /><stop offset="1" stopColor="#efcf6c" />
                </linearGradient>
                <linearGradient id="screen" x1="0" y1="0" x2="1" y2="1">
                    <stop offset="0" stopColor="#2d7fd2" /><stop offset="1" stopColor="#7cc0f4" />
                </linearGradient>
                <linearGradient id="goGreen" x1="0" y1="0" x2="0" y2="1">
                    <stop offset="0" stopColor="#5cbb58" /><stop offset="1" stopColor="#1e8a2a" />
                </linearGradient>
                <radialGradient id="grayBall" cx=".4" cy=".3" r=".8">
                    <stop offset="0" stopColor="#cfcfcf" /><stop offset="1" stopColor="#989898" />
                </radialGradient>
            </defs>
        </svg>
    );
}

export default function App() {
    return (
        <div className="relative flex min-h-screen w-full flex-col bg-white font-['DejaVu_Sans_Condensed','DejaVu_Sans',sans-serif] text-[11px] leading-[13px] text-black">
            <Gradients />
            <TitleBar />
            <MenuBar />
            <Toolbar />
            <AddressBar />
            <main className="flex flex-1">
                <aside className="flex w-[210px] shrink-0 flex-col gap-4 border-l border-[#d6e2f6] bg-linear-to-b from-[#6c9ee8] via-[#5a84d4] to-[#5470bd] px-3 pt-3">
                    <Panel title="File and Folder Tasks" items={tasks} />
                    <Panel title="Other Places" items={places} />
                    <Panel title="Details" />
                </aside>
                <div className="grid flex-1 auto-rows-[75px] grid-cols-[repeat(auto-fill,75px)] content-start pl-px pt-[5px]">
                    {files.map((file, i) => <FileItem key={i} {...file} />)}
                </div>
            </main>
            <Taskbar />
            <ContextMenu />
        </div>
    );
}
